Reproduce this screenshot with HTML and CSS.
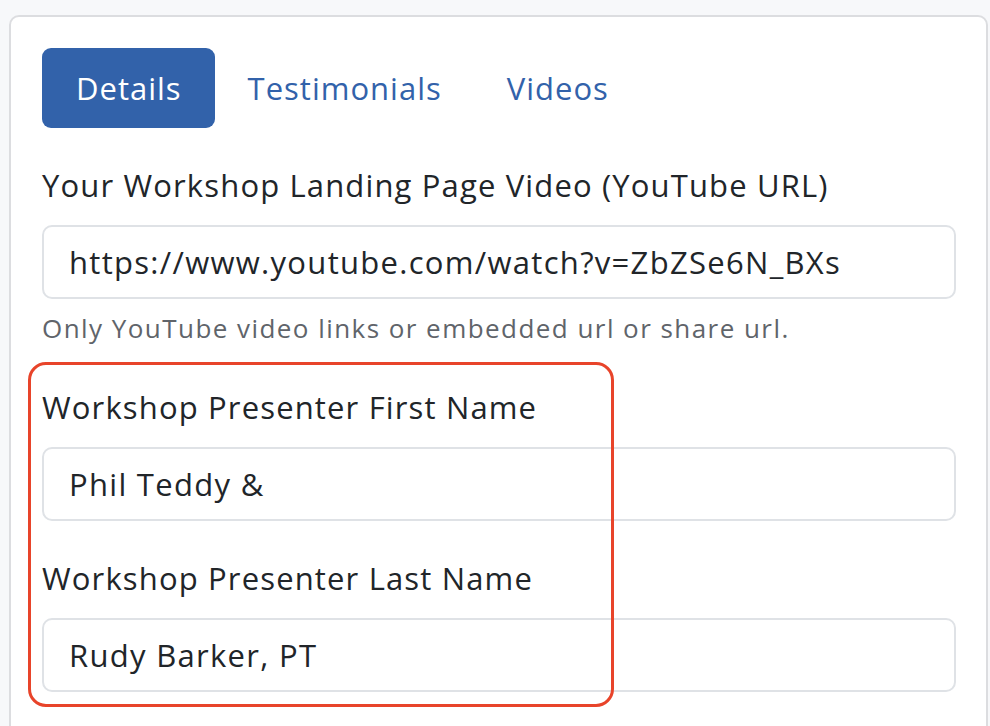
FILE: index.html
```html
<!DOCTYPE html>
<html lang="en">
<head>
<meta charset="utf-8">
<title>Workshop Details</title>
<link rel="stylesheet" href="styles.css">
</head>
<body>
<div class="card">
  <nav class="tabs">
    <a class="tab active">Details</a>
    <a class="tab">Testimonials</a>
    <a class="tab">Videos</a>
  </nav>
  <div class="group first">
    <label class="label">Your Workshop Landing Page Video (YouTube URL)</label>
    <div class="input">https://www.youtube.com/watch?v=ZbZSe6N_BXs</div>
    <div class="help">Only YouTube video links or embedded url or share url.</div>
  </div>
  <div class="group second">
    <label class="label">Workshop Presenter First Name</label>
    <div class="input">Phil Teddy &amp;</div>
  </div>
  <div class="group third">
    <label class="label">Workshop Presenter Last Name</label>
    <div class="input">Rudy Barker, PT</div>
  </div>
  <div class="highlight"></div>
</div>
</body>
</html>
```
FILE: styles.css
```css
html, body {
  margin: 0;
  padding: 0;
  background: #f7f8fa;
  font-family: "Open Sans", "Liberation Sans", sans-serif;
  color: #212529;
}
.card {
  position: relative;
  margin: 15px 2px 0 9px;
  height: 760px;
  box-sizing: border-box;
  background: #ffffff;
  border: 2px solid #dcdde0;
  border-radius: 10px;
  padding: 31px 30px 0 31px;
}
.tabs {
  display: flex;
  height: 80px;
}
.tab {
  display: flex;
  align-items: center;
  padding: 0 32px 0 33px;
  font-size: 31px;
  letter-spacing: 1px;
  color: #3262aa;
  border-radius: 9px;
}
.tab.active {
  padding: 0 33px 0 34px;
  background: #3262aa;
  color: #ffffff;
}
.group {
  display: flex;
  flex-direction: column;
}
.label {
  font-size: 31px;
  line-height: 40px;
  letter-spacing: 1.15px;
  margin-bottom: 20px;
}
.group.first { margin-top: 37px; }
.group.second { margin-top: 43px; }
.group.third { margin-top: 37px; }
.input {
  height: 74px;
  box-sizing: border-box;
  border: 2px solid #dfe2e6;
  border-radius: 10px;
  padding: 0 25px;
  display: flex;
  align-items: center;
  font-size: 31px;
  letter-spacing: 1.3px;
}
.help {
  margin-top: 13px;
  font-size: 26px;
  line-height: 32px;
  letter-spacing: 1.45px;
  color: #60646a;
}
.highlight {
  position: absolute;
  left: 17px;
  top: 345px;
  width: 586px;
  height: 345px;
  box-sizing: border-box;
  border: 3px solid #e8442a;
  border-radius: 18px;
  pointer-events: none;
}
```
